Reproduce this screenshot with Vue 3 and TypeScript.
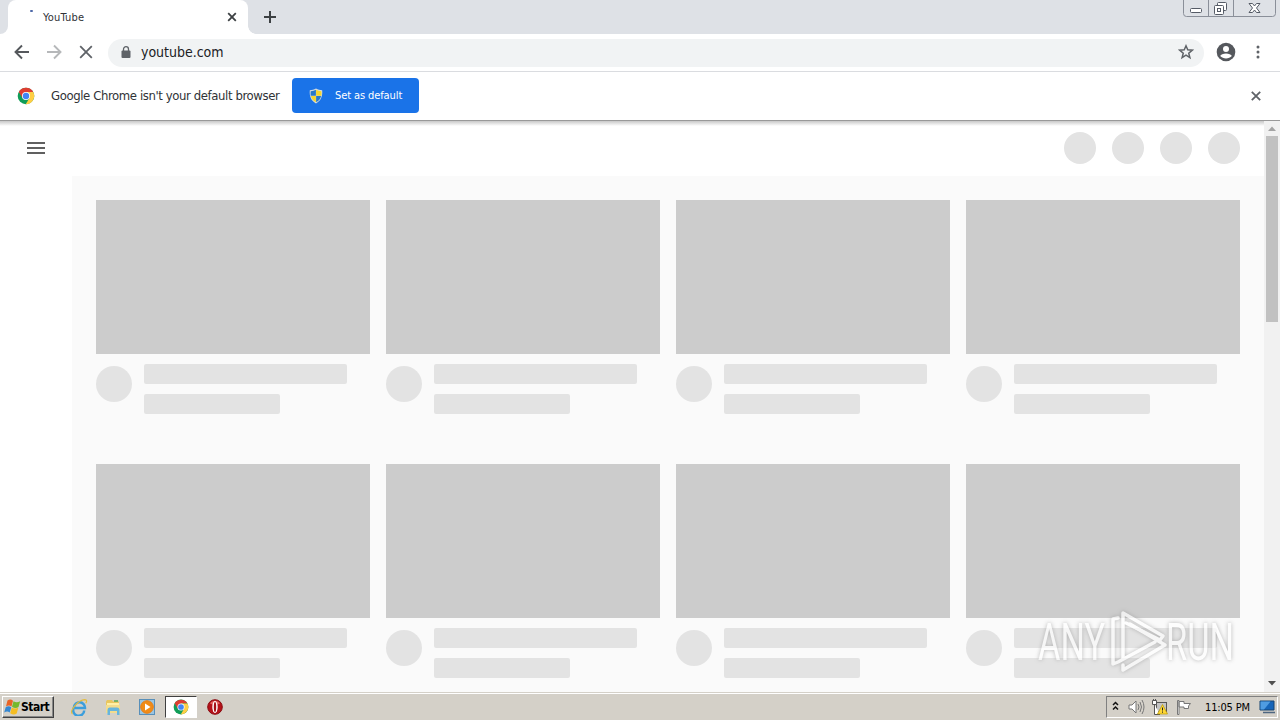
<script setup lang="ts">
const cards: number[] = [1, 2, 3, 4, 5, 6, 7, 8]
const actions: number[] = [1, 2, 3, 4]
</script>

<template>
  <div class="screen">
    <header class="tabstrip">
      <div class="left-cap"></div>
      <div class="tab">
        <i class="spinner"></i>
        <span class="tab-title">YouTube</span>
        <svg class="tab-close" width="10" height="10" viewBox="0 0 10 10"><path d="M1.2 1.2l7.6 7.6M8.8 1.2L1.2 8.8" stroke="#3c4043" stroke-width="1.8" /></svg>
      </div>
      <svg class="plus" width="14" height="14" viewBox="0 0 14 14"><path d="M7 1v12M1 7h12" stroke="#3c4043" stroke-width="2" /></svg>
      <svg class="window-buttons" width="94" height="18" viewBox="0 0 94 18" fill="none">
        <path d="M.5 0v13.500q0 3 3 3h86q3 0 3-3V0M25.500 0v16M50.500 0v16" stroke="#8a8f99" />
        <rect x="7.500" y="8.500" width="11" height="4" rx="1" fill="#fff" stroke="#555b66" />
        <g stroke="#555b66" fill="#fff"><rect x="34.500" y="2.500" width="9" height="8" rx="1" /><rect x="31.500" y="5.500" width="9" height="9" rx="1" /><rect x="34.500" y="8.500" width="3" height="3" /></g>
        <path d="M66 3.500h3.500l2 2.500 2-2.500H77L73.500 8l3.500 4.500h-3.500l-2-2.500-2 2.500H66L69.500 8z" stroke="#555b66" fill="#fff" />
      </svg>
    </header>

    <div class="toolbar">
      <svg class="nav" width="16" height="16" viewBox="0 0 16 16"><path d="M15 8H2M8 1.500L1.500 8 8 14.500" fill="none" stroke="#55585c" stroke-width="1.900" /></svg>
      <svg class="nav" width="16" height="16" viewBox="0 0 16 16"><path d="M1 8h13M8 1.500L14.500 8 8 14.500" fill="none" stroke="#b6b8ba" stroke-width="1.900" /></svg>
      <svg class="nav" width="16" height="16" viewBox="0 0 16 16"><path d="M2.200 2.200l11.600 11.600M13.800 2.200L2.200 13.800" fill="none" stroke="#5f6368" stroke-width="1.800" /></svg>
      <div class="omnibox">
        <svg class="lock" width="10" height="13" viewBox="0 0 10 13"><rect x=".5" y="4.500" width="9" height="7.500" rx="1" fill="#5f6368" /><path d="M2.500 5V3.200a2.500 2.500 0 015 0V5" fill="none" stroke="#5f6368" stroke-width="1.300" /></svg>
        <span class="url">youtube.com</span>
        <svg class="star" width="16" height="16" viewBox="0 0 16 16"><path d="M8 1.800l1.750 4 4.500.35-3.500 3 1.150 4.400L8 11.200l-3.900 2.350 1.150-4.400-3.500-3 4.500-.35z" fill="none" stroke="#5f6368" stroke-width="1.500" /></svg>
      </div>
      <svg class="profile" width="20" height="20" viewBox="0 0 20 20"><circle cx="10" cy="10" r="9.300" fill="#55585d" /><circle cx="10" cy="7" r="3" fill="#fff" /><path d="M4.200 14c1-3.500 10.600-3.500 11.600 0-2.800 3.300-8.800 3.300-11.600 0z" fill="#fff" /></svg>
      <svg class="more" width="4" height="16" viewBox="0 0 4 16" fill="#5f6368"><circle cx="2" cy="3" r="1.500" /><circle cx="2" cy="8" r="1.500" /><circle cx="2" cy="13" r="1.500" /></svg>
    </div>

    <div class="infobar">
      <svg class="chrome" viewBox="0 0 18 18"><use href="#chrome-logo" /></svg>
      <span class="info-text">Google Chrome isn't your default browser</span>
      <button class="default-btn">
        <svg width="14" height="16" viewBox="0 0 14 16">
          <path d="M7 .5c2 1.300 4 1.700 6.200 1.700.5 6-1.200 10.500-6.200 13.200C2 12.700.3 8.200.8 2.200 3 2.200 5 1.800 7 .5z" fill="#d5dde0" />
          <path d="M6.900 1.800v5.900H1.700Q1.500 5.500 1.700 3.200 4.800 3.200 6.900 1.800z" fill="#2878c8" /><path d="M7.100 1.800v5.900h5.200q.3-2.200.1-4.500Q9.200 3.200 7.100 1.800z" fill="#f5d52d" />
          <path d="M6.900 7.900H1.900Q2.900 12 6.900 14.200z" fill="#f5d52d" /><path d="M7.100 7.900h5Q11.100 12 7.100 14.200z" fill="#2878c8" />
        </svg>
        <span class="btn-text">Set as default</span>
      </button>
      <svg class="info-close" width="10" height="10" viewBox="0 0 10 10"><path d="M.8.8l8.400 8.400M9.200.8L.8 9.200" stroke="#5f6368" stroke-width="1.800" /></svg>
    </div>

    <main class="viewport">
      <div class="page">
        <div class="masthead">
          <div class="burger"><i></i><i></i><i></i></div>
          <div class="actions"><i v-for="a in actions" :key="a"></i></div>
        </div>
        <div class="grid">
          <article v-for="card in cards" :key="card" class="card">
            <div class="thumb"></div>
            <div class="details">
              <div class="avatar"></div>
              <div class="lines"><div class="line long"></div><div class="line short"></div></div>
            </div>
          </article>
        </div>
      </div>
      <div class="scrollbar">
        <svg width="16" height="15" viewBox="0 0 16 15"><path d="M4 10l4-4.500L12 10z" fill="#a3a3a3" /></svg>
        <div class="thumb-bar"></div>
        <svg class="down" width="16" height="17" viewBox="0 0 16 17"><path d="M4 6l4 4.500L12 6z" fill="#505050" /></svg>
      </div>
      <svg class="watermark" width="212" height="76" viewBox="0 0 212 76">
        <g class="mark">
          <text x="6" y="56" textLength="67" lengthAdjust="spacingAndGlyphs">ANY</text>
          <text x="134" y="56" textLength="68" lengthAdjust="spacingAndGlyphs">RUN</text>
          <g fill="none" stroke-linejoin="round" stroke-linecap="round" stroke-width="3.500">
            <path d="M86 14l-5 1v45l5-2 37-20" />
            <path d="M91 54V9l40 23-3 4-34-17" />
            <path d="M98 20l35 21-42 25v-5" />
          </g>
        </g>
      </svg>
    </main>

    <footer class="taskbar">
      <button class="start">
        <svg width="17" height="16" viewBox="0 0 17 16"><path d="M3.500 1.500q3-2 5.500.3L7.500 7.500q-2.500-2-5.500 0z" fill="#e96325" /><path d="M9.500 2.200q3 2 6.700 0L14.500 8q-3 2-6.500-.3z" fill="#75b82c" /><path d="M1.700 8.200q3-2 5.600 0L5.700 13.500q-2.500-2-5.500 0z" fill="#3487d2" /><path d="M7.800 8.500q3 2 6.500.3L12.700 14.500q-3 2-6.500-.3z" fill="#f5bd22" /></svg>
        <span>Start</span>
      </button>
      <div class="launchers">
        <div class="launcher"><svg width="18" height="18" viewBox="0 0 18 18"><path d="M14.200 12.500A5.500 5.500 0 114 9.500 5.500 5.500 0 0115 10H5" fill="none" stroke="#3b9edc" stroke-width="2.500" /><path d="M2.500 16C-1 13 8 2 14.800 1.700c2.500 0 2 2 1 3.600" fill="none" stroke="#e4bb3d" stroke-width="1.200" /></svg></div>
        <div class="launcher"><svg width="18" height="18" viewBox="0 0 18 18"><path d="M2 3.500l1-1.500h5l1 1.500h6V14H2z" fill="#e9c65e" /><path d="M3 5h12v8H3z" fill="#fff0a6" /><path d="M2 7h14v8H2z" fill="#f3dc8d" /><path d="M3.500 17v-5q0-2.500 2-2.500h7.500q2.500 0 2.500 2.500v5h-2.500v-4H6v4z" fill="#67b5dd" /><path d="M10 3h4" stroke="#55a957" stroke-width="1.500" /></svg></div>
        <div class="launcher"><svg width="18" height="18" viewBox="0 0 18 18"><rect x="1.500" y="1.500" width="15" height="15" fill="#9bc5e1" stroke="#588fb9" /><circle cx="9" cy="9" r="6.300" fill="#f18b16" stroke="#e57f18" /><path d="M7 5.500v7l5.500-3.500z" fill="#fff" /></svg></div>
        <div class="launcher active"><svg class="task-chrome" viewBox="0 0 18 18"><use href="#chrome-logo" /></svg></div>
        <div class="launcher"><svg width="18" height="18" viewBox="0 0 18 18"><circle cx="9" cy="9" r="7.300" fill="#b51119" stroke="#8a0b10" /><path d="M4 5.500a6 6 0 0110 0Q9 8 4 5.500z" fill="#e3625e" /><ellipse cx="9" cy="9" rx="2.700" ry="6" fill="#fff" /><ellipse cx="9" cy="9" rx="1.200" ry="5" fill="#a50e15" /></svg></div>
      </div>
      <div class="tray">
        <svg class="chevrons" width="7" height="10" viewBox="0 0 7 10"><path d="M1 4l2.500-2.500L6 4M1 8.500L3.500 6 6 8.500" fill="none" stroke="#111" stroke-width="1.500" /></svg>
        <svg class="sound" width="18" height="18" viewBox="0 0 18 18" fill="none" stroke="#777"><path d="M2 7h3l4-4v12l-4-4H2z" fill="#fff" /><path d="M11 6q2 3 0 6M13 4q3 5 0 10M15 2q4 7 0 14" /></svg>
        <svg class="network" width="17" height="17" viewBox="0 0 17 17"><rect x="5.500" y="3.500" width="10" height="9" fill="#c4c4c4" stroke="#555" /><path d="M1.500 1.500h4v4h-4zM3.500 5.500v10H9" fill="#fff" stroke="#555" /><path d="M2.500 0v2M4.500 0v2" stroke="#555" /><path d="M11.500 5.500l5 9.500h-10z" fill="#ffd735" stroke="#b99900" stroke-width=".7" /><path d="M11.500 8.500v3M11.500 12.500v1.200" stroke="#222" /></svg>
        <svg class="flag" width="17" height="17" viewBox="0 0 17 17" fill="#fff" stroke="#777"><path d="M2.500 1.500h1.500v14H2.500zM4 2.500h5v2h6.500L13.500 7v2.500H9V8H4z" /></svg>
        <span class="time">11:05 PM</span>
        <svg class="desktop" width="17" height="14" viewBox="0 0 17 14"><path d="M1 1h14v9H1z" fill="#1665b9" stroke="#174571" /><path d="M1.500 1.500h10L5 9.500H1.500z" fill="#4f9ce2" /><path d="M4 12.500h12" stroke="#4e6680" stroke-width="1.500" /></svg>
      </div>
    </footer>

    <svg width="0" height="0" class="defs"><symbol id="chrome-logo" viewBox="0 0 18 18">
      <circle cx="9" cy="9" r="8.300" fill="#109d58" /><path d="M9 9L1.800 4.900A8.300 8.300 0 0116.200 4.900L9 5z" fill="#df3d31" /><path d="M9 5h7.200A8.300 8.300 0 018.700 17.300L12.500 11z" fill="#ffce44" /><path d="M1.800 4.900L5.500 11 9 5z" fill="#df3d31" /><circle cx="9" cy="9" r="4" fill="#fff" /><circle cx="9" cy="9" r="3.200" fill="#4285f4" />
    </symbol></svg>
  </div>
</template>

<style>
body { margin: 0; overflow: hidden; }
</style>

<style scoped>
* { box-sizing: border-box; }
.screen { width: 1280px; height: 720px; display: flex; flex-direction: column; overflow: hidden; background: #fff; font-family: "DejaVu Sans Condensed", "DejaVu Sans", sans-serif; color: #303236; position: relative; }
svg { display: block; flex: none; }
span { white-space: nowrap; }
.tabstrip { height: 34px; display: flex; background: #dee1e6; flex: none; }
.left-cap { width: 8px; background: #fff; }
.left-cap::before { content: ""; display: block; width: 8px; height: 34px; background: #dee1e6; border-radius: 0 0 8px 0; }
.tab { width: 240px; background: #fff; border-radius: 8px 8px 0 0; display: flex; align-items: center; padding: 0 11px 0 21px; position: relative; }
.tab::after { content: ""; position: absolute; left: 240px; bottom: 0; width: 8px; height: 8px; background: radial-gradient(circle at 8px 0, transparent 7.5px, #fff 8px); }
.spinner { width: 3px; height: 2px; margin: -13px 10px 0 1px; border-radius: 1px; background: #4e69a8; }
.tab-title { font-size: 11px; letter-spacing: .18px; }
.tab-close { margin-left: auto; }
.plus { margin: 10px 0 0 15px; }
.window-buttons { margin-left: auto; margin-right: 3px; }
.toolbar { height: 38px; flex: none; display: flex; align-items: center; padding: 0 20px 0 14px; border-bottom: 1px solid #dadce0; }
.nav { margin-right: 16px; position: relative; top: -.5px; }
.omnibox { width: 1096px; height: 28px; border-radius: 14px; background: #f1f3f4; display: flex; align-items: center; padding: 0 10px 0 13px; margin-left: -2px; }
.lock, .star, .profile, .more { margin-top: -1px; }
.url { margin: -2px 0 0 10px; font-size: 14px; letter-spacing: -.02px; color: #202124; }
.star { margin-left: auto; }
.profile { margin-left: 12px; }
.more { margin-left: 20px; }
.infobar { height: 49px; flex: none; display: flex; align-items: center; padding: 0 19px 1px 17px; border-bottom: 1px solid #999; }
.chrome { width: 18px; height: 18px; }
.info-text { width: 229px; margin-left: 16px; font-size: 13px; letter-spacing: -.4px; }
.default-btn { width: 127px; height: 35px; margin-left: 12px; border: 0; border-radius: 4px; background: #1a73e8; color: #fff; display: flex; align-items: center; padding: 0 0 0 17px; font: 11px "DejaVu Sans Condensed", "DejaVu Sans", sans-serif; }
.btn-text { margin-left: 12px; letter-spacing: -.1px; }
.info-close { margin-left: auto; }
.viewport { flex: 1; min-height: 0; display: flex; position: relative; overflow: hidden; }
.viewport::before { content: ""; position: absolute; z-index: 1; width: 1264px; height: 5px; background: linear-gradient(#c8c8c8, #fff0); }
.page { width: 1264px; display: flex; flex-direction: column; }
.masthead { height: 55px; flex: none; display: flex; justify-content: space-between; padding: 11px 24px 0 27px; }
.burger { width: 18px; padding-top: 10px; display: flex; flex-direction: column; gap: 3px; }
.burger i { height: 2px; background: #606060; }
.actions { display: flex; gap: 16px; }
.actions i { width: 32px; height: 32px; border-radius: 50%; background: #e3e3e3; }
.grid { flex: 1; margin-left: 72px; background: #fafafa; padding: 24px; display: grid; grid-template-columns: repeat(4, 274px); grid-auto-rows: 264px; column-gap: 16px; align-content: start; min-height: 0; }
.thumb { height: 154px; background: #ccc; }
.details { display: flex; padding-top: 10px; }
.avatar { width: 36px; height: 36px; border-radius: 50%; background: #e3e3e3; margin: 2px 12px 0 0; }
.line { height: 20px; border-radius: 2px; background: #e3e3e3; margin-bottom: 10px; }
.long { width: 203px; }
.short { width: 136px; }
.scrollbar { width: 16px; background: #f1f1f1; display: flex; flex-direction: column; }
.thumb-bar { width: 12px; height: 186px; background: #c1c1c1; margin: 0 2px; }
.down { margin-top: auto; }
.watermark { position: absolute; right: 36px; bottom: 12px; z-index: 2; opacity: .7; }
.mark { fill: #fff; stroke: #fff; filter: drop-shadow(0 0 2px #999); }
.mark text { font: 52px/1 Roboto, sans-serif; stroke: none; }
.taskbar { height: 28px; flex: none; display: flex; background: #d4d0c8; border-top: 1px solid #d4d0c8; box-shadow: inset 0 1px #fff; padding-top: 3px; }
.start { width: 52px; height: 22px; margin-left: 2px; display: flex; align-items: center; padding: 0 0 1px 1px; border: 1px solid; border-color: #fff #404040 #404040 #fff; box-shadow: inset -1px -1px #888; background: #d4d0c8; color: #000; font: bold 12px "DejaVu Sans Condensed", "DejaVu Sans", sans-serif; letter-spacing: -.5px; }
.launchers { display: flex; margin-left: 9px; gap: 2px; }
.launcher { width: 32px; height: 22px; display: flex; align-items: center; justify-content: center; }
.active { background: #fff; border: 1px solid; border-color: #404040 #fff #fff #404040; }
.task-chrome { width: 16px; height: 16px; }
.tray { margin-left: auto; width: 172px; height: 22px; margin-right: 2px; border: 1px solid; border-color: #808080 #fff #fff #808080; display: flex; align-items: center; color: #000; }
.chevrons { margin-left: 5px; margin-bottom: 3px; }
.sound { margin-left: 8px; }
.network { margin-left: 6px; }
.flag { margin-left: 7px; }
.time { margin-left: 13px; width: 46px; font-size: 11px; letter-spacing: -.15px; }
.desktop { margin-left: 8px; }
.defs { position: absolute; }
</style>
